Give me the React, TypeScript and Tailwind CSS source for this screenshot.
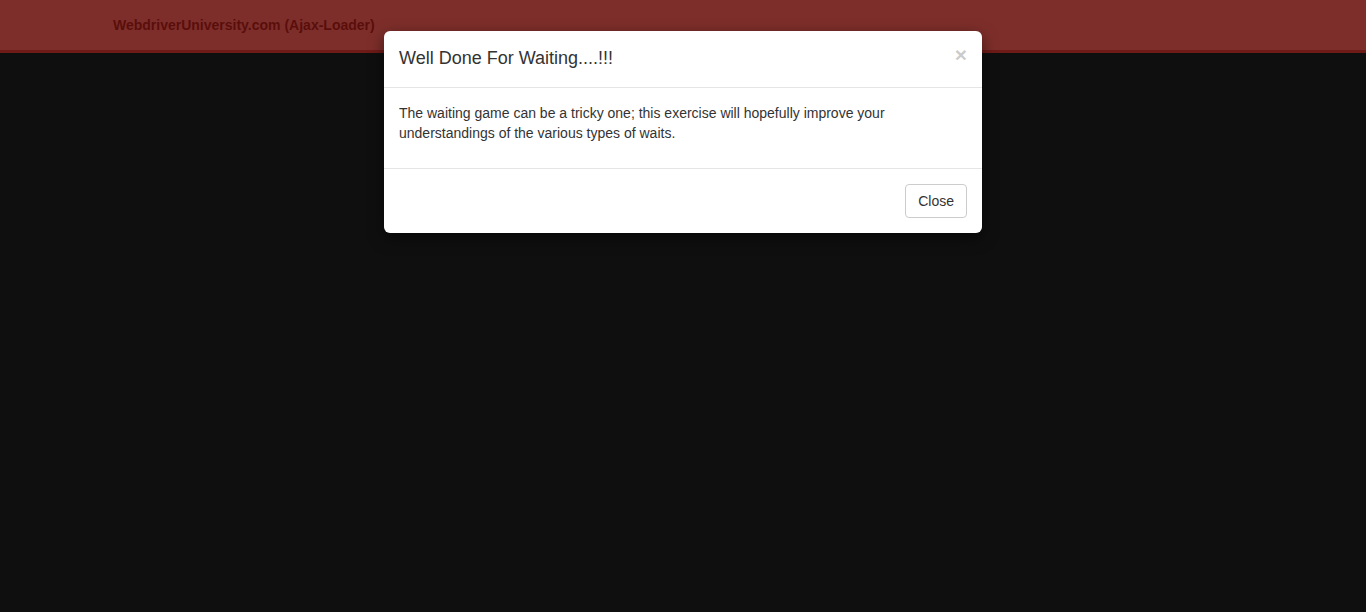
import React from 'react';

const App: React.FC = () => {
  return (
    <div
      className="min-h-[612px] h-[612px] bg-[#0f0f0f] flex flex-col overflow-hidden relative"
      style={{ fontFamily: '"Liberation Sans", Arial, sans-serif' }}
    >
      {/* Navbar (dimmed by backdrop) */}
      <div className="h-[53px] bg-[#7d2e2a] border-b-[3px] border-[#6e1a17] flex items-center shrink-0">
        <span className="ml-[113px] text-[14px] font-bold text-[#5a0e0c]">WebdriverUniversity.com (Ajax-Loader)</span>
      </div>

      {/* Modal */}
      <div className="absolute left-[384px] top-[31px] w-[598px] bg-white rounded-[6px] shadow-[0_5px_15px_rgba(0,0,0,0.5)] text-[#333]">
        <div className="flex items-center justify-between px-[15px] pt-[14px] pb-[16px] border-b border-[#e5e5e5]">
          <h4 className="text-[18px] leading-[26px]">Well Done For Waiting....!!!</h4>
          <button className="text-[21px] leading-none font-bold text-black opacity-20 -mt-[7px]">×</button>
        </div>
        <div className="p-[15px]">
          <p className="text-[14px] leading-[20px] mb-[10px]">
            The waiting game can be a tricky one; this exercise will hopefully improve your understandings of the various types of waits.
          </p>
        </div>
        <div className="flex justify-end p-[15px] border-t border-[#e5e5e5]">
          <button className="h-[34px] px-[12px] text-[14px] text-[#333] bg-white border border-[#ccc] rounded-[4px]">Close</button>
        </div>
      </div>
    </div>
  );
};

export default App;
